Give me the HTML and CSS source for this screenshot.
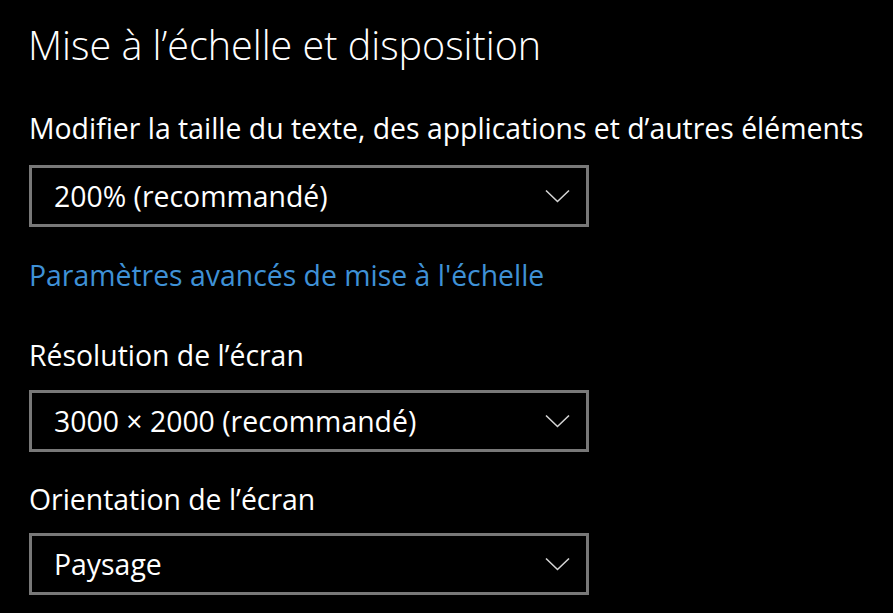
FILE: index.html
```html
<!DOCTYPE html>
<html lang="fr">
	<head>
		<meta charset="UTF-8">
		<title>Mise à l'échelle et disposition</title>
		<link rel="stylesheet" href="styles.css">
	</head>
	<body>
		<div class="page">
			<h1 class="title">Mise à l’échelle et disposition</h1>

			<div class="label first">Modifier la taille du texte, des applications et d’autres éléments</div>
			<div class="combo">
				<span class="value">200% (recommandé)</span>
				<svg class="chev" width="25" height="14" viewBox="0 0 25 14"><polyline points="1,1.5 12.5,12.5 24,1.5" fill="none" stroke="#d4d4d4" stroke-width="1.6"/></svg>
			</div>

			<a class="link" href="#">Paramètres avancés de mise à l'échelle</a>

			<div class="label res">Résolution de l’écran</div>
			<div class="combo">
				<span class="value">3000 × 2000 (recommandé)</span>
				<svg class="chev" width="25" height="14" viewBox="0 0 25 14"><polyline points="1,1.5 12.5,12.5 24,1.5" fill="none" stroke="#d4d4d4" stroke-width="1.6"/></svg>
			</div>

			<div class="label orient">Orientation de l’écran</div>
			<div class="combo">
				<span class="value">Paysage</span>
				<svg class="chev" width="25" height="14" viewBox="0 0 25 14"><polyline points="1,1.5 12.5,12.5 24,1.5" fill="none" stroke="#d4d4d4" stroke-width="1.6"/></svg>
			</div>
		</div>
	</body>
</html>
```
FILE: styles.css
```css
html,body{
	margin:0;
	background:#000;
}
body{
	font-family:"Open Sans","Noto Sans",sans-serif;
	color:#fff;
	overflow:hidden;
}
.page{
	display:flex;
	flex-direction:column;
	align-items:flex-start;
	padding-left:28px;
}
.title{
	margin:19px 0 0;
	font-size:39.5px;
	font-weight:300;
	line-height:52px;
}
.label{
	font-size:28.4px;
	line-height:40px;
	padding-left:1px;
}
.label.first{
	margin-top:37px;
}
.label.res{
	margin-top:40px;
}
.label.orient{
	margin-top:27px;
}
.combo{
	box-sizing:border-box;
	width:560px;
	height:62px;
	margin-top:17px;
	margin-left:1px;
	border:3px solid #787878;
	padding:0 16px 0 22px;
	display:flex;
	align-items:center;
	justify-content:space-between;
	font-size:28.4px;
}
.res + .combo{
	margin-top:15px;
}
.orient + .combo{
	margin-top:14px;
}
.chev{
	display:block;
}
.link{
	margin-top:28px;
	padding-left:1px;
	font-size:28.4px;
	line-height:40px;
	color:#3f91d6;
	text-decoration:none;
}
```
